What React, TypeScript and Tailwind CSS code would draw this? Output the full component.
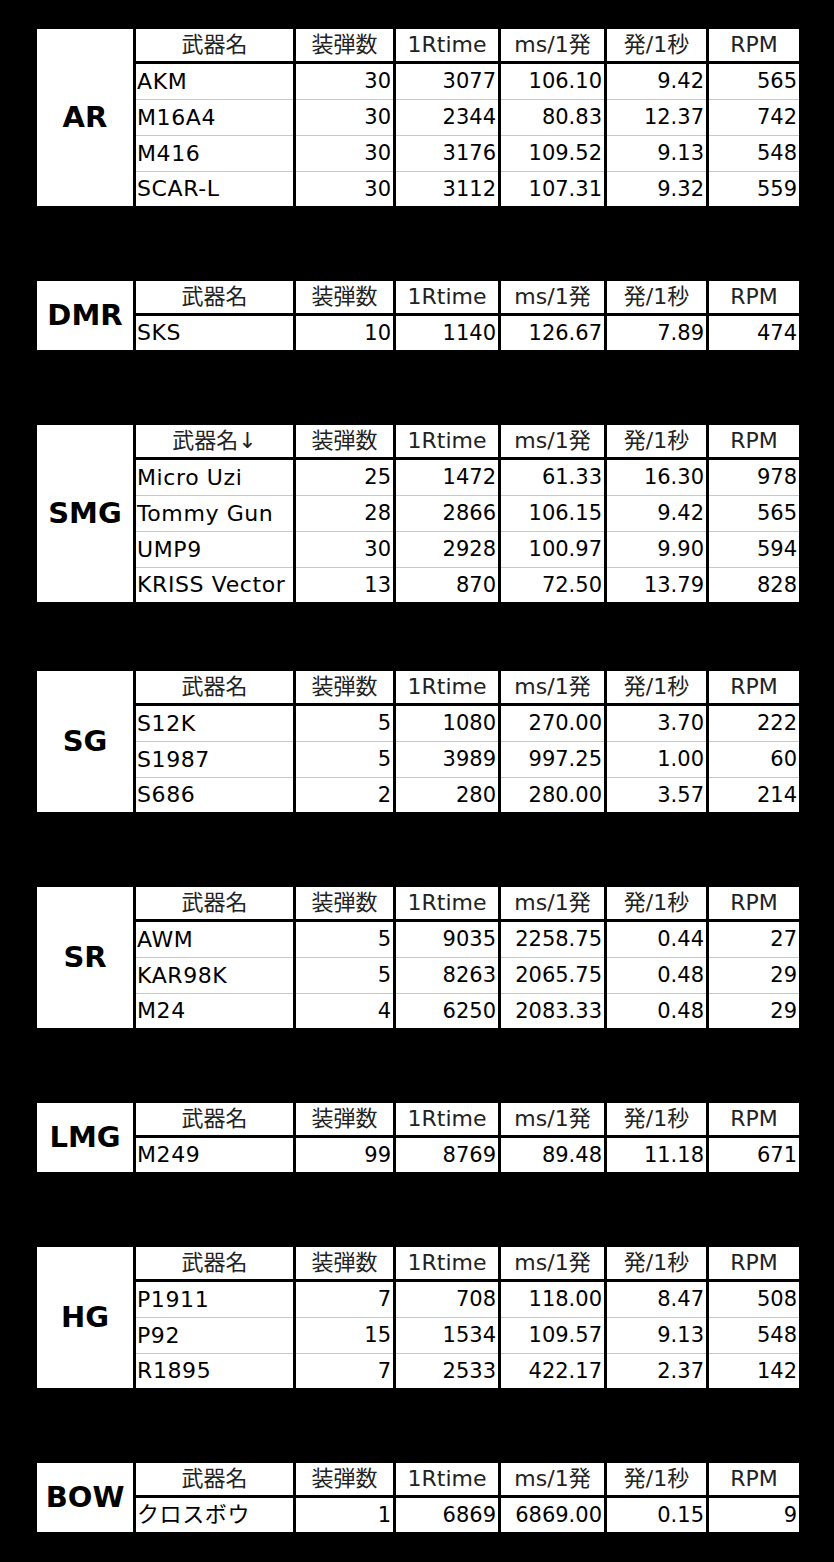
const headers = ["装弾数", "1Rtime", "ms/1発", "発/1秒", "RPM"];

type Section = { label: string; nameHeader?: string; mt: string; rows: string[][] };

const sections: Section[] = [
  {
    label: "AR",
    mt: "mt-0",
    rows: [
      ["AKM", "30", "3077", "106.10", "9.42", "565"],
      ["M16A4", "30", "2344", "80.83", "12.37", "742"],
      ["M416", "30", "3176", "109.52", "9.13", "548"],
      ["SCAR-L", "30", "3112", "107.31", "9.32", "559"],
    ],
  },
  {
    label: "DMR",
    mt: "mt-[75px]",
    rows: [["SKS", "10", "1140", "126.67", "7.89", "474"]],
  },
  {
    label: "SMG",
    nameHeader: "武器名↓",
    mt: "mt-[75px]",
    rows: [
      ["Micro Uzi", "25", "1472", "61.33", "16.30", "978"],
      ["Tommy Gun", "28", "2866", "106.15", "9.42", "565"],
      ["UMP9", "30", "2928", "100.97", "9.90", "594"],
      ["KRISS Vector", "13", "870", "72.50", "13.79", "828"],
    ],
  },
  {
    label: "SG",
    mt: "mt-[69px]",
    rows: [
      ["S12K", "5", "1080", "270.00", "3.70", "222"],
      ["S1987", "5", "3989", "997.25", "1.00", "60"],
      ["S686", "2", "280", "280.00", "3.57", "214"],
    ],
  },
  {
    label: "SR",
    mt: "mt-[75px]",
    rows: [
      ["AWM", "5", "9035", "2258.75", "0.44", "27"],
      ["KAR98K", "5", "8263", "2065.75", "0.48", "29"],
      ["M24", "4", "6250", "2083.33", "0.48", "29"],
    ],
  },
  {
    label: "LMG",
    mt: "mt-[75px]",
    rows: [["M249", "99", "8769", "89.48", "11.18", "671"]],
  },
  {
    label: "HG",
    mt: "mt-[75px]",
    rows: [
      ["P1911", "7", "708", "118.00", "8.47", "508"],
      ["P92", "15", "1534", "109.57", "9.13", "548"],
      ["R1895", "7", "2533", "422.17", "2.37", "142"],
    ],
  },
  {
    label: "BOW",
    mt: "mt-[75px]",
    rows: [["クロスボウ", "1", "6869", "6869.00", "0.15", "9"]],
  },
];

// column widths measured off the sheet; black shows through the 3px gaps
const cols = "grid grid-cols-[157px_97px_102px_103px_99px_90px] gap-x-[3px]";

const WeaponTable = ({ s }: { s: Section }) => {
  return (
    <div className={`flex gap-[3px] ${s.mt}`}>
      <div className="flex w-[96px] items-center justify-center bg-white text-[29px] font-bold text-black">
        {s.label}
      </div>
      <div className="flex flex-col">
        <div className={cols}>
          {[s.nameHeader ?? "武器名", ...headers].map((h) => (
            <div
              key={h}
              className="flex h-[32px] items-center justify-center bg-white text-[22px] text-[#222]"
            >
              {h}
            </div>
          ))}
        </div>
        <div className={`mt-[3px] ${cols}`}>
          {s.rows.map((row, i) => {
            const last = i === s.rows.length - 1;
            return row.map((cell, j) => (
              <div
                key={`${i}-${j}`}
                className={`flex items-center bg-white ${
                  last ? "h-[34px]" : "h-[36px] border-b border-[#c8c8c8]"
                } ${
                  j === 0
                    ? "justify-start pl-[1px] text-[22px] tracking-[0.6px]"
                    : "justify-end pr-[2px] text-[21px]"
                }`}
              >
                {cell}
              </div>
            ));
          })}
        </div>
      </div>
    </div>
  );
};

export default function App() {
  return (
    <div className="min-h-[1562px] w-[834px] bg-black pb-[30px] pl-[37px] pt-[29px] font-[family-name:DejaVu_Sans,Noto_Sans_CJK_JP,sans-serif] leading-none text-black">
      {sections.map((s) => (
        <WeaponTable key={s.label} s={s} />
      ))}
    </div>
  );
}
